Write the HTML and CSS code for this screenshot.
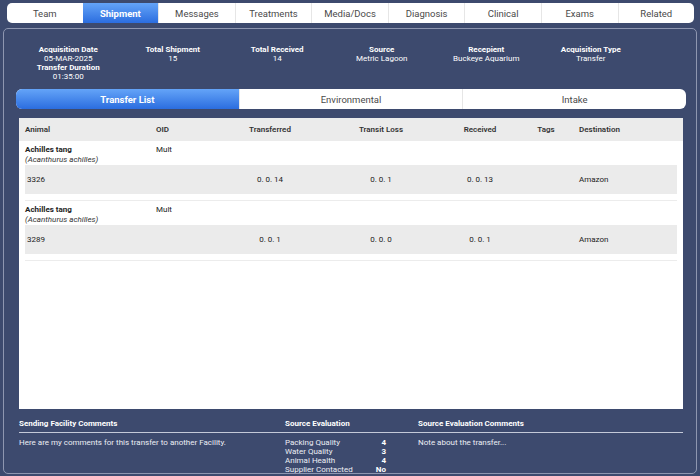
FILE: index.html
```html
<!DOCTYPE html>
<html lang="en">
  <head>
    <meta charset="UTF-8" />
    <meta name="viewport" content="width=device-width, initial-scale=1.0" />
    <title>Shipment</title>
    <link rel="stylesheet" href="styles.css">
  </head>
  <body>
    <nav class="tabs">
      <a class="tab">Team</a>
      <a class="tab active">Shipment</a>
      <a class="tab">Messages</a>
      <a class="tab">Treatments</a>
      <a class="tab">Media/Docs</a>
      <a class="tab">Diagnosis</a>
      <a class="tab">Clinical</a>
      <a class="tab">Exams</a>
      <a class="tab">Related</a>
    </nav>

    <main class="panel">
      <section class="summary">
        <div class="stat">
          <b>Acquisition Date</b><span>05-MAR-2025</span>
          <b>Transfer Duration</b><span>01:35:00</span>
        </div>
        <div class="stat"><b>Total Shipment</b><span>15</span></div>
        <div class="stat"><b>Total Received</b><span>14</span></div>
        <div class="stat"><b>Source</b><span>Metric Lagoon</span></div>
        <div class="stat"><b>Recepient</b><span>Buckeye Aquarium</span></div>
        <div class="stat"><b>Acquisition Type</b><span>Transfer</span></div>
      </section>

      <nav class="subtabs">
        <a class="subtab active">Transfer List</a>
        <a class="subtab">Environmental</a>
        <a class="subtab">Intake</a>
      </nav>

      <section class="list">
        <div class="row head">
          <div>Animal</div>
          <div>OID</div>
          <div class="mid">Transferred</div>
          <div class="mid">Transit Loss</div>
          <div class="mid">Received</div>
          <div class="mid">Tags</div>
          <div class="dest">Destination</div>
        </div>

        <div class="group">
          <div class="row name">
            <div><b>Achilles tang</b><i>(Acanthurus achilles)</i></div>
            <div>Mult</div>
          </div>
          <div class="row data">
            <div class="id">3326</div>
            <div></div>
            <div class="mid">0. 0. 14</div>
            <div class="mid">0. 0. 1</div>
            <div class="mid">0. 0. 13</div>
            <div class="mid"></div>
            <div class="dest">Amazon</div>
          </div>
        </div>

        <div class="group">
          <div class="row name">
            <div><b>Achilles tang</b><i>(Acanthurus achilles)</i></div>
            <div>Mult</div>
          </div>
          <div class="row data">
            <div class="id">3289</div>
            <div></div>
            <div class="mid">0. 0. 1</div>
            <div class="mid">0. 0. 0</div>
            <div class="mid">0. 0. 1</div>
            <div class="mid"></div>
            <div class="dest">Amazon</div>
          </div>
        </div>
      </section>

      <footer class="notes">
        <div class="notes-head">
          <b>Sending Facility Comments</b>
          <b>Source Evaluation</b>
          <b>Source Evaluation Comments</b>
        </div>
        <div class="notes-body">
          <p>Here are my comments for this transfer to another Facility.</p>
          <dl class="eval">
            <dt>Packing Quality</dt><dd>4</dd>
            <dt>Water Quality</dt><dd>3</dd>
            <dt>Animal Health</dt><dd>4</dd>
            <dt>Supplier Contacted</dt><dd>No</dd>
          </dl>
          <p>Note about the transfer...</p>
        </div>
      </footer>
    </main>
  </body>
</html>
```

FILE: styles.css
```css
body {
  margin: 0;
  height: 476px;
  overflow: hidden;
  background-color: #3d4a6e;
  font-family: Roboto, "Liberation Sans", sans-serif;
}

/* top tabs */
.tabs {
  display: flex;
  height: 20px;
  margin: 3px 6px 0 7px;
  background-color: #fff;
  border-radius: 5px;
  overflow: hidden;
}

.tab {
  flex: 1;
  display: flex;
  align-items: center;
  justify-content: center;
  font-size: 9.5px;
  color: #4a4a4a;
  border-left: 1px solid #e6e6e6;
}

.tab:first-child {
  border-left: none;
}

.tab.active,
.subtab.active {
  background: linear-gradient(#64a4f8, #2b6ddf);
  color: #fff;
  font-weight: 700;
  border-left: none;
}

/* main panel */
.panel {
  display: flex;
  flex-direction: column;
  box-sizing: border-box;
  height: 446px;
  margin: 5px 3px 0;
  padding: 16px 10px 0 12px;
  border: 1px solid #8e96b0;
  border-radius: 5px;
  overflow: hidden;
}

.panel > * {
  flex-shrink: 0;
}

.summary {
  display: grid;
  grid-template-columns: repeat(6, 104.5px);
  color: #fff;
  font-size: 8px;
  line-height: 9px;
  text-align: center;
}

.stat {
  display: flex;
  flex-direction: column;
}

.subtabs {
  display: flex;
  height: 20px;
  margin-top: 8px;
  background-color: #fff;
  border-radius: 6px;
  overflow: hidden;
}

.subtab {
  flex: 1;
  display: flex;
  align-items: center;
  justify-content: center;
  font-size: 9.5px;
  color: #4a4a4a;
  border-left: 1px solid #e6e6e6;
}

.subtab:first-child {
  border-left: none;
}

/* transfer list */
.list {
  height: 291px;
  margin: 9px 3px 0 3px;
  background-color: #fff;
  font-size: 8px;
  color: #222;
}

.row {
  display: grid;
  grid-template-columns: 131px 59px 110px 112px 86px 46px 1fr;
}

.head {
  height: 23px;
  padding: 0 6px;
  align-items: center;
  background-color: #ebebeb;
  font-weight: 600;
  color: #333;
}

.mid {
  text-align: center;
}

.dest {
  padding-left: 10px;
}

.group {
  margin: 0 6px;
  padding-bottom: 6px;
  border-bottom: 1px solid #ececec;
}

.name {
  height: 24px;
  box-sizing: border-box;
  padding-top: 4px;
  line-height: 10px;
}

.name b,
.name i {
  display: block;
}

.name i {
  color: #333;
}

.data {
  height: 29px;
  align-items: center;
  background-color: #ebebeb;
}

.data .id {
  padding-left: 2px;
}

/* comments footer */
.notes {
  margin: 10px 3px 0 3px;
  color: #fff;
  font-size: 8px;
  line-height: 9px;
}

.notes-head,
.notes-body {
  display: grid;
  grid-template-columns: 266px 133px 1fr;
}

.notes-head {
  padding-bottom: 4px;
  border-bottom: 1px solid #c4c9d8;
}

.notes-body {
  padding-top: 5px;
  color: #eceef4;
}

.notes-body p {
  margin: 0;
}

.eval {
  display: grid;
  grid-template-columns: 1fr auto;
  width: 101px;
  margin: 0;
}

.eval dd {
  margin: 0;
  text-align: right;
  font-weight: 700;
  color: #fff;
}
```
